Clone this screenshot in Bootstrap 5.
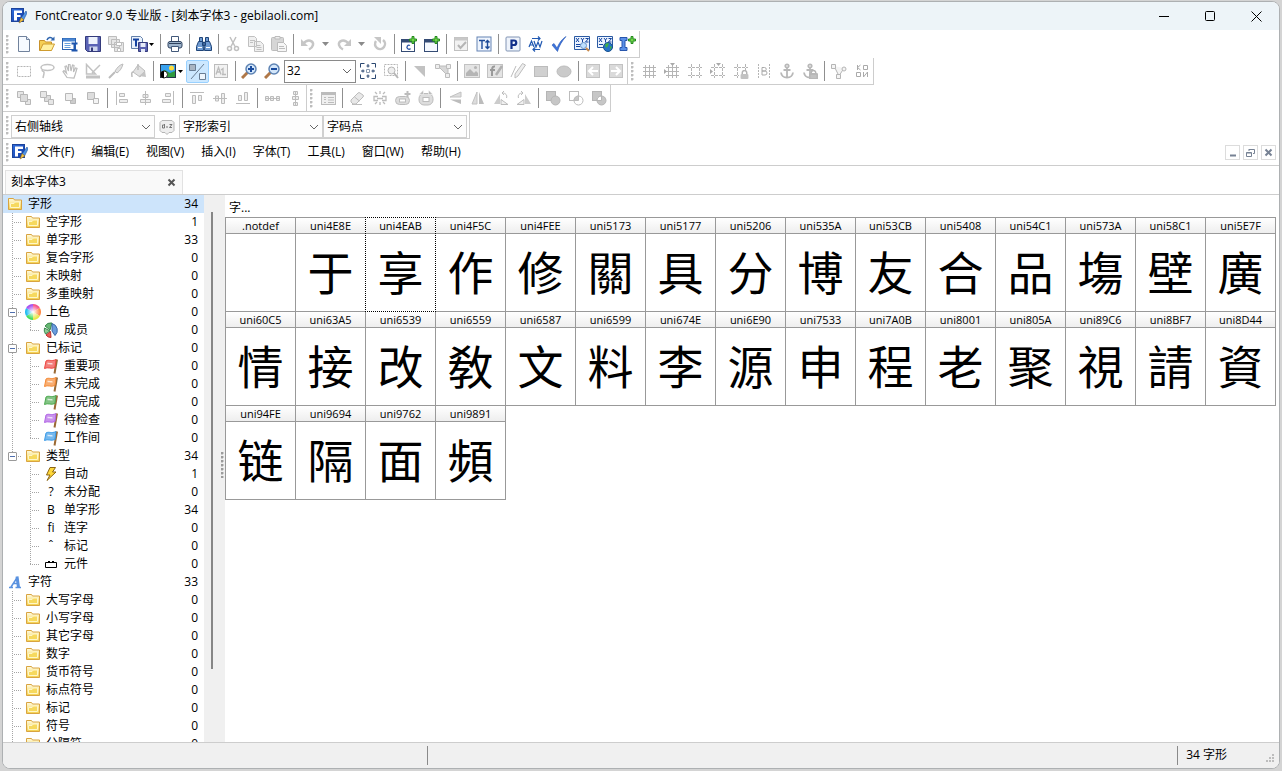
<!DOCTYPE html>
<html lang="zh-CN">
<head>
<meta charset="utf-8">
<meta name="viewport" content="width=device-width, initial-scale=1">
<title>FontCreator 9.0 专业版</title>
<link href="https://cdn.jsdelivr.net/npm/bootstrap@5.3.0/dist/css/bootstrap.min.css" rel="stylesheet">
<script src="https://cdn.jsdelivr.net/npm/bootstrap@5.3.0/dist/js/bootstrap.bundle.min.js"></script>
<style>
body{font-family:"Open Sans","Noto Sans CJK SC",sans-serif;font-size:12px;line-height:18px;color:#000;background:#d4d4d4;padding:1px 2px 2px;overflow:hidden}
button{font:inherit;color:inherit;background:none;border:0;padding:0}
svg{display:block;flex:none}
.win{border:1px solid #adb0b2;border-radius:8px;background:#fff;overflow:hidden}
.titlebar{height:29px;background:#edf4f8;padding-left:8px}
.capbtn{width:46px;height:27px;display:flex;align-items:center;justify-content:center}
.bands{padding-top:1px}
.band{height:27px;border:solid #cdcdcd;border-width:0 1px 1px 0;display:flex;align-items:center}
.strip{height:27px;border-bottom:1px solid #cdcdcd}
.grip{width:9px;height:20px;flex:none;background:radial-gradient(circle at 1px 1px,#bdbdbd 1px,transparent 2px) 3px 1px/9px 4px repeat-y}
.bar-end{border-left:1px solid #cdcdcd;height:26px;display:flex;align-items:center}
.tb{width:23px;height:23px;display:flex;align-items:center;justify-content:center;flex:none;color:#c2c2c2}
.tb.wide{width:30px;gap:1px;color:#000}
.tb.arr{width:13px;color:#8a8a8a}
.tb.on{background:#cce8ff;border:1px solid #99d1ff;border-radius:2px}
.sep{width:1px;height:20px;background:#8f8f8f;margin:0 2px 0 3px;flex:none}
.combo{font-size:12px;line-height:20px;height:23px;padding:0 20px 0 3px;border:1px solid #d0d0d0;border-radius:0;color:#000;background-color:#fdfdfd;background-image:url("data:image/svg+xml,%3Csvg xmlns='http://www.w3.org/2000/svg' viewBox='0 0 10 10'%3E%3Cpath d='M1 3l4 4 4-4' fill='none' stroke='%23666'/%3E%3C/svg%3E");background-size:10px 10px;background-position:right 3px center;width:144px}
.combo.zoom{width:72px;border-color:#8a8a8a;background-color:#fff;padding-left:2px}
.combos{align-items:flex-end;padding-right:2px}
.combos .grip{width:8px;align-self:center}
.combos .tb{width:24px}
.mi{padding:0 8px 0 9px}
.mdis{gap:3px;padding-right:3px}
.mdi{width:15px;height:15px;border:1px solid #dcdcdc;display:flex;align-items:center;justify-content:center}
.tabs{height:29px;border-bottom:1px solid #cdcdcd}
.doctab{width:178px;height:24px;margin:4px 0 0 2px;background:#f9f9f9;border:1px solid #e2e2e2;border-bottom:0;padding:0 6px 0 5px}
.tree{width:201px;overflow:hidden}
.trow{height:18px;padding:0 6px 0 9px;display:flex;align-items:center;position:relative}
.trow.top{padding-left:3px}
.trow.sel{background:#cde4fb}
.ic{width:18px;height:18px;display:flex;align-items:center;justify-content:center;margin-right:4px;flex:none}
.guide{width:18px;height:18px;flex:none}
.twig{width:12px;height:18px;flex:none}
.guide,.twig{--v:repeating-linear-gradient(#a5a5a5 0 1px,#fff 1px 2px);--h:repeating-linear-gradient(90deg,#a5a5a5 0 1px,#fff 1px 2px)}
.guide.line{background:var(--v) 0 0/1px 18px no-repeat}
.twig{background:var(--v) 0 0/1px 18px no-repeat,var(--h) 0 9px/10px 1px no-repeat}
.twig.last{background:var(--v) 0 0/1px 9px no-repeat,var(--h) 0 9px/10px 1px no-repeat}
.exp{position:absolute;left:5px;top:5px;width:9px;height:9px;border:1px solid #9a9a9a;border-radius:1px;background:linear-gradient(#4f6fae,#4f6fae) center/5px 1px no-repeat,#fff}
.scroll{width:21px;background:#f0f0f0;padding-top:17px}
.thumb{width:2px;height:457px;background:#868686;margin-left:7px}
.split{width:3px;height:26px;margin:240px 0 0 8px;background:radial-gradient(circle at 1px 1px,#9b9b9b 1px,transparent 2px) 0 0/3px 4px}
.glyphs{display:grid;grid-template-columns:repeat(auto-fill,70px);margin:0;padding:0 0 0 1px;list-style:none}
.glyphs li{height:95px;margin:0 0 -1px -1px;border:1px solid #999}
.glyphs span{display:block;height:16px;line-height:16px;text-align:center;border-bottom:1px solid #999;background:linear-gradient(#fff,#eee);font-size:11px}
.glyphs b{display:block;font:400 46px/72px "Noto Sans CJK TC","Noto Sans CJK SC",sans-serif;text-align:center}
.glyphs .cur{border:1px dotted #000;background:#fff;position:relative;z-index:1}
.status{height:27px;background:#f0f0f0;border-top:1px solid #cdcdcd}
.vline{width:1px;height:19px;background:#8a8a8a}
</style>
</head>
<body class="vh-100">
<svg width="0" height="0" class="position-absolute">
<defs>
<linearGradient id="gy" x2="0" y2="1"><stop stop-color="#fffbe0"/><stop offset="1" stop-color="#f3d04a"/></linearGradient>
<linearGradient id="gb" x2="1" y2="1"><stop stop-color="#2f6fe0"/><stop offset="1" stop-color="#1238a0"/></linearGradient>
<radialGradient id="gw"><stop stop-color="#fff"/><stop offset="1" stop-color="#fff" stop-opacity="0"/></radialGradient>
</defs>
<symbol id="logo" viewBox="0 0 16 16"><rect x=".5" y=".5" width="12" height="13" fill="url(#gb)" stroke="#1c449c"/><path d="M3 2.500h8v2.500H6v2h3.500v2H6v3.500H3z" fill="#fff"/><path d="M15 3l-5 7-1 4 3.500-2L16 5z" fill="#4f94e4" stroke="#1f4f9c" stroke-width=".6"/><path d="M8 15l2-5.500 3 2.500z" fill="#f5c242" stroke="#7a5a1c" stroke-width=".5"/></symbol>
<symbol id="folder" viewBox="0 0 16 16"><path d="M1.500 13.500v-11h5l1 1.500h7v9.500z" fill="url(#gy)" stroke="#d9a441"/><path d="M3.500 11.500v-4H7l1.500-1.500h4v5.500z" fill="#f6d95e" stroke="#fff6c8"/></symbol>
<symbol id="flag" viewBox="0 0 16 16"><path d="M14 1.500L11.500 15.500" stroke="#9a6a35" stroke-width="2"/><path d="M3 3c3-2 5 1 10-1.500L12 9.500c-4 2-7-1-10.500 1z" fill="currentColor" fill-opacity=".7" stroke="currentColor"/><path d="M4.500 5.500c2-.5 3 .8 5 .2" stroke="#fff" stroke-opacity=".7" stroke-width="1.500" fill="none"/></symbol>
<symbol id="dn" viewBox="0 0 7 4"><path d="M0 0h7L3.500 4z" fill="currentColor"/></symbol>
<symbol id="plus" viewBox="0 0 8 8"><path d="M3 .5h2V3h2.500v2H5v2.500H3V5H.5V3H3z" fill="#6fd34a" stroke="#228a1c"/></symbol>
<symbol id="lock" viewBox="0 0 8 8"><path d="M2 4V2.500a2 2 0 014 0V4" fill="none" stroke="#b5b5b5" stroke-width="1.300"/><rect x=".5" y="3.500" width="7" height="4.500" rx="1" fill="#c2c2c2"/></symbol>
</svg>

<div class="win h-100 d-flex flex-column">
<header class="titlebar d-flex align-items-center">
<svg width="16" height="16"><use href="#logo"/></svg>
<span class="ms-2 me-auto">FontCreator 9.0 专业版 - [刻本字体3 - gebilaoli.com]</span>
<button class="capbtn" aria-label="最小化"><svg width="11" height="11"><path d="M0 5.500h10" stroke="#000"/></svg></button>
<button class="capbtn" aria-label="最大化"><svg width="11" height="11" fill="none"><rect x=".5" y=".5" width="9" height="9" rx="1" stroke="#000"/></svg></button>
<button class="capbtn" aria-label="关闭"><svg width="11" height="11"><path d="M.5.5l10 10M10.500.5l-10 10" stroke="#000"/></svg></button>
</header>

<div class="bands d-flex flex-column">
<div class="band align-self-start">
<i class="grip"></i>
<button class="tb" aria-label="新建"><svg width="16" height="16" fill="none"><path d="M2.500.5h8l3 3v12h-11z" fill="#f6faff" stroke="#71829c"/><path d="M10.500.5v3h3" fill="#dce6f5" stroke="#71829c"/></svg></button>
<button class="tb" aria-label="打开"><svg width="16" height="16"><path d="M.5 14.500v-10h5l1 1.500h6v8z" fill="#f5cf55" stroke="#c8922a"/><path d="M1 14.500L4 8h11.500l-3 6.500z" fill="#fff0a0" stroke="#cf9c2f"/><path d="M8 4c1-3 4-3.500 6-1" fill="none" stroke="#2f65ae" stroke-width="1.500"/><path d="M15.500.5v4h-4z" fill="#2f65ae"/></svg></button>
<button class="tb" aria-label="打开已安装字体"><svg width="16" height="16"><rect x=".5" y="2.500" width="13" height="11" fill="#fff" stroke="#2b62b0"/><path d="M1 4h12" stroke="#4b87d4" stroke-width="3"/><path d="M2.500 7.500h6m-6 2h6m-6 2h6" stroke="#68a0dd"/><path d="M9.500 7.500h6m-3 0v7m-3 0h6" stroke="#1d55ad" stroke-width="2"/></svg></button>
<button class="tb" aria-label="保存"><svg width="16" height="16"><path d="M.5.5h15v15h-13l-2-2z" fill="#5a63b5" stroke="#343b7c"/><path d="M3.500 1h9v7h-9z" fill="#eef3fc"/><path d="M4.500 10.500h8V15h-8z" fill="#cfd7ee"/><path d="M6 11.500h2V15H6z" fill="#343b7c"/></svg></button>
<button class="tb" aria-label="全部保存"><svg width="16" height="16" fill="#e6e6e6" stroke="#bdbdbd"><path d="M.5.5h8v8h-8zM3.500 3.500h8v8h-8zM6.500 6.500h9v9h-9z"/><path d="M8.500 6.500h5v3h-5zM9.500 12.500h3v3h-3z" fill="#fff"/></svg></button>
<button class="tb wide" aria-label="导出字体"><svg width="17" height="16"><path d="M.5.5h9l2 2v10H.5z" fill="#eaf2fc" stroke="#6380aa"/><path d="M2 3.500h6m-3 0v7" stroke="#1542a0" stroke-width="2"/><path d="M7.500 6.500h9v9h-9z" fill="#5960b0" stroke="#343b7c"/><path d="M9.500 7h5v4h-5zM10 13h4v3h-4z" fill="#e6ebf8"/></svg><svg width="5" height="3"><use href="#dn"/></svg></button>
<i class="sep"></i>
<button class="tb" aria-label="打印"><svg width="16" height="16"><path d="M4.500.5h7v5h-7z" fill="#fff" stroke="#42597a"/><rect x="1" y="5.500" width="14" height="6.500" rx="2" fill="#9eb4cc" stroke="#2f425e"/><path d="M2 7.500h12" stroke="#2f425e"/><path d="M4.500 10.500h7v5h-7z" fill="#fff" stroke="#42597a"/></svg></button>
<i class="sep"></i>
<button class="tb" aria-label="查找"><svg width="16" height="16" fill="#6f9bd2" stroke="#1f4478"><path d="M3.500 1.500h3v4h-3zM9.500 1.500h3v4h-3zM2.500 5.500h4.500l.5 9h-7v-4zM13.500 5.500H9l-.5 9h7v-4zM6.500 6.500h3v3h-3z"/><path d="M2 11.500h4m4 0h4" stroke="#fff"/></svg></button>
<i class="sep"></i>
<button class="tb" aria-label="剪切"><svg width="16" height="16" fill="none" stroke="#c0c0c0" stroke-width="1.500"><path d="M5 1l5 9.500M11 1L6 10.500"/><circle cx="4.500" cy="12.500" r="2"/><circle cx="11.500" cy="12.500" r="2"/></svg></button>
<button class="tb" aria-label="复制"><svg width="16" height="16" fill="#f0f0f0" stroke="#c0c0c0"><path d="M.5.500h6l2 2v8h-8zM6.500 5.500h6l3 3v7h-9z"/><path d="M2 4.500h5m-5 2h3M8.500 9.500h4m-4 2h5m-5 2h5"/></svg></button>
<button class="tb" aria-label="粘贴"><svg width="16" height="16" fill="#d6d6d6" stroke="#bcbcbc"><rect x=".5" y="1.500" width="12" height="13" rx="1"/><path d="M4 .5h5v2.500H4z" fill="#eee"/><path d="M6.500 6.500h6l3 3v6h-9z" fill="#f6f6f6"/><path d="M8 10.500h5m-5 2h6"/></svg></button>
<i class="sep"></i>
<button class="tb" aria-label="撤销"><svg width="16" height="16" fill="none" stroke="#c6c6c6" stroke-width="2.500"><path d="M3 8c5-6 11-3 10 1-.5 2-2 3.500-4 4.500"/><path d="M1 3v7h7z" fill="#c6c6c6" stroke="none"/></svg></button>
<button class="tb arr" aria-label="撤销列表"><svg width="7" height="4"><use href="#dn"/></svg></button>
<button class="tb" aria-label="重做"><svg width="16" height="16" fill="none" stroke="#c6c6c6" stroke-width="2.500"><path d="M13 8C8 2 2 5 3 9c.5 2 2 3.500 4 4.500"/><path d="M15 3v7H8z" fill="#c6c6c6" stroke="none"/></svg></button>
<button class="tb arr" aria-label="重做列表"><svg width="7" height="4"><use href="#dn"/></svg></button>
<button class="tb" aria-label="重复"><svg width="16" height="16" fill="none" stroke="#c6c6c6" stroke-width="2.500"><path d="M11 4a5 5 0 11-7 1"/><path d="M2 1h7v7z" fill="#c6c6c6" stroke="none"/></svg></button>
<i class="sep"></i>
<button class="tb" aria-label="添加字符"><svg width="16" height="16"><rect x=".5" y="3.500" width="13" height="12" fill="#fff" stroke="#344b74"/><path d="M1 5h12" stroke="#344b74" stroke-width="3"/><path d="M9 9.500a2 2 0 10.500 3" fill="none" stroke="#2952a5" stroke-width="1.300"/><use href="#plus" x="8" width="8" height="8"/></svg></button>
<button class="tb" aria-label="添加字形"><svg width="16" height="16"><rect x=".5" y="3.500" width="13" height="12" fill="#f5f9ff" stroke="#344b74"/><path d="M1 5h12" stroke="#344b74" stroke-width="3"/><use href="#plus" x="8" width="8" height="8"/></svg></button>
<i class="sep"></i>
<button class="tb" aria-label="验证"><svg width="16" height="16"><rect x="1.500" y="1.500" width="13" height="13" fill="#f2f2f2" stroke="#c0c0c0"/><path d="M1.500 3h13" stroke="#c8c8c8" stroke-width="3"/><path d="M5 9l2.500 3L13 6" fill="none" stroke="#b5b5b5" stroke-width="2"/></svg></button>
<button class="tb" aria-label="自动度量"><svg width="16" height="16" fill="none" stroke="#1d4a98"><rect x="1" y="1" width="14" height="14" fill="#eef4fd" stroke="#6483b4"/><path d="M3 4.500h6M6 4.500V13m5.500-8.500v8m-2-6l2-2 2 2m-4 4l2 2 2-2" stroke-width="1.400"/></svg></button>
<i class="sep"></i>
<button class="tb" aria-label="预览"><svg width="16" height="16"><rect x="1" y="1" width="14" height="14" rx="1" fill="#eef3fb" stroke="#8194b4"/><path d="M6.500 13V4.500H9a2.200 2.200 0 010 4.500H7" fill="none" stroke="#12308a" stroke-width="2.200"/></svg></button>
<button class="tb" aria-label="字距调整"><svg width="16" height="16" fill="none" stroke="#2159b2" stroke-width="1.200"><path d="M1 11l2.500-6L6 11M2 9h3M6 5l2 6 2-5 2 5 2-6M4 2.500h8m-2-2l2 2-2 2M12 13.500H5m2-2l-2 2 2 2"/></svg></button>
<button class="tb" aria-label="检查"><svg width="16" height="16"><path d="M1 9l2-1.500L6 12C8 7 11 3 15 .5 11 5 8 10 6.500 15.500z" fill="#3d73dd" stroke="#2757b5" stroke-width=".6"/></svg></button>
<button class="tb" aria-label="测试字体"><svg width="16" height="16"><path d="M.5.5h15v13H.5z" fill="#edf4ff" stroke="#2b5aa2"/><path d="M2 2l3 4m0-4L2 6m5-4l1.500 2L10 2M8.500 4v2.500M11.500 2.500h3l-3 3.500h3M2 8.500h5m-5 2h4" fill="none" stroke="#1546a0"/><circle cx="9.500" cy="9.500" r="3" fill="#bfe0ff" stroke="#6b94c6"/><path d="M12 12l3 3" stroke="#c98a4a" stroke-width="2"/></svg></button>
<button class="tb" aria-label="网络测试"><svg width="16" height="16"><path d="M.5.5h15v11H.5z" fill="#edf4ff" stroke="#2b5aa2"/><path d="M2 2l3 4m0-4L2 6m5-4l1.500 2L10 2M8.500 4v2.500M11.500 2.500h3l-3 3.500h3M2 8.500h4" fill="none" stroke="#1546a0"/><circle cx="11" cy="11" r="4.500" fill="#2674c8" stroke="#18508e"/><path d="M8 9c2-3 3-1 4-2l-1 3-2 2zm5 1l2 1-2 3z" fill="#3fae49"/></svg></button>
<button class="tb" aria-label="安装字体"><svg width="17" height="16"><path d="M1 1.500h7v3H6v7h2v3H1v-3h2v-7H1z" fill="#5a90e8" stroke="#2755ac"/><use href="#plus" x="9" width="8" height="8"/></svg></button>
</div>

<div class="band align-self-start">
<i class="grip"></i>
<button class="tb" aria-label="矩形选择"><svg width="16" height="16" fill="none"><rect x="1.500" y="3.500" width="13" height="10" stroke="#b5b5b5" stroke-dasharray="2 1"/></svg></button>
<button class="tb" aria-label="套索"><svg width="16" height="16" fill="none" stroke="#c2c2c2" stroke-width="1.500"><ellipse cx="8.500" cy="4.500" rx="6.500" ry="3"/><path d="M3 6.500c0 3 3 1 2 4l-1 4.500"/></svg></button>
<button class="tb" aria-label="平移"><svg width="16" height="16" fill="none" stroke="#bcbcbc" stroke-width="1.200"><path d="M5 14.500L1 8.500l1-1L4.500 10 3 3.500l1.500-.5L6.500 8 6.500 1.500H8L9 8l1.500-6 1.500.5L11.500 9 13.500 5l1.500.5-2 6.500-1 3z"/></svg></button>
<button class="tb" aria-label="测量"><svg width="16" height="16" fill="none" stroke="#c2c2c2" stroke-width="1.500"><path d="M1.500 1.500l9 9.500h-9zM15 2L7 10"/><path d="M1 14h14" stroke-width="3"/></svg></button>
<button class="tb" aria-label="刀"><svg width="16" height="16"><path d="M15 1c-4 1-6 4-8 7l2 2c3-2 5-5 6-9z" fill="#e2e2e2" stroke="#bcbcbc"/><path d="M7 9l-6 6" stroke="#bcbcbc" stroke-width="2"/></svg></button>
<button class="tb" aria-label="填充"><svg width="16" height="16"><path d="M7 2l7 6-5 6-7-5z" fill="#e2e2e2" stroke="#bcbcbc"/><path d="M2 9c-2 0-1 3-1 5M7 7V1" stroke="#bcbcbc" stroke-width="1.500" fill="none"/><path d="M8 13l6-5 1 6z" fill="#c4c4c4"/></svg></button>
<i class="sep"></i>
<button class="tb wide" aria-label="背景图像"><svg width="17" height="16"><rect x=".5" y="1.500" width="15" height="13" fill="#38a1ee" stroke="#26364a"/><path d="M1 14V9l4-2 5 3 5-2v6z" fill="#2f9a3f"/><circle cx="11.500" cy="5" r="2.500" fill="#ffdc3c"/><circle cx="4" cy="11.500" r="3.500" fill="#fff" stroke="#222"/><path d="M4 8a3.500 3.500 0 000 7z"/></svg><svg width="5" height="3"><use href="#dn"/></svg></button>
<button class="tb on" aria-label="轮廓与节点" aria-pressed="true"><svg width="17" height="17" fill="none" stroke="#6a7e94"><path d="M.5 1.500h6v6h-6z" fill="#a9b5c2"/><path d="M10.500 10.500h6v6h-6z" fill="#eef6fd"/><path d="M2 16L15 1"/></svg></button>
<button class="tb" aria-label="字符显示"><svg width="16" height="16" fill="none" stroke="#bcbcbc"><rect x="1.500" y="1.500" width="13" height="13" fill="#f2f2f2"/><path d="M3 11.500l2.500-7 2.500 7M4 9h3m3 2.500v-6l-2 1.500m1 4.500h4" stroke-width="1.300"/></svg></button>
<i class="sep"></i>
<button class="tb" aria-label="放大"><svg width="17" height="16"><path d="M7 9l-6 6" stroke="#b07848" stroke-width="3"/><circle cx="10" cy="6" r="5" fill="#d3e6fa" stroke="#5f84b4" stroke-width="1.500"/><path d="M7 6h6m-3-3v6" stroke="#194b9e" stroke-width="2"/></svg></button>
<button class="tb" aria-label="缩小"><svg width="17" height="16"><path d="M7 9l-6 6" stroke="#b07848" stroke-width="3"/><circle cx="10" cy="6" r="5" fill="#d3e6fa" stroke="#5f84b4" stroke-width="1.500"/><path d="M7 6h6" stroke="#194b9e" stroke-width="2"/></svg></button>
<select class="form-select combo zoom" aria-label="缩放"><option>32</option></select>
<button class="tb" aria-label="适合窗口"><svg width="16" height="16" fill="none" stroke="#2a4770"><path d="M.5 4.500v-4h4m7 0h4v4m0 7v4h-4m-7 0h-4v-4M8 1v3.500M8 11.500V15M1 8h3.500M11.500 8H15M6.500 3h3m-3 10h3M3 6.500v3m10-3v3" /><path d="M6.500 6.500h3v3h-3z" stroke="#8a9ab0"/></svg></button>
<button class="tb" aria-label="缩放选区"><svg width="16" height="16" fill="none" stroke="#b5b5b5"><path d="M1.500 1.500h13v11h-13z" stroke-dasharray="2 1"/><circle cx="8.500" cy="7.500" r="3.500" fill="#eee"/><path d="M11 10l4 5" stroke-width="2"/></svg></button>
<i class="sep"></i>
<button class="tb" aria-label="轮廓"><svg width="16" height="16"><path d="M2 3h11v11z" fill="#c2c2c2"/></svg></button>
<button class="tb" aria-label="节点"><svg width="16" height="16" fill="#eee" stroke="#bcbcbc"><path d="M3 3l10 10V3z" fill="#d8d8d8"/><path d="M.5 1.500h4v4h-4zM11.500 1.500h4v4h-4zM10.500 10.500h4v4h-4z"/></svg></button>
<i class="sep"></i>
<button class="tb" aria-label="插入图像"><svg width="16" height="16"><rect x=".5" y="1.500" width="15" height="13" fill="#e4e4e4" stroke="#c2c2c2"/><path d="M2 13V10l4-4 4 4 2-2 2 2v3z" fill="#b5b5b5"/><circle cx="11.500" cy="4.500" r="1.500" fill="#b5b5b5"/></svg></button>
<button class="tb" aria-label="编辑图像"><svg width="16" height="16"><rect x=".5" y="1.500" width="15" height="13" fill="#e4e4e4" stroke="#c2c2c2"/><path d="M8 3.500c-3-.5-3 1-3 9.500M3 7h5" stroke="#999" stroke-width="2" fill="none"/><path d="M15 3l-6 9" stroke="#b0b0b0" stroke-width="2.500"/></svg></button>
<button class="tb" aria-label="绘制轮廓"><svg width="16" height="16" fill="#eee" stroke="#bcbcbc"><path d="M12.500.5l3 1.500L8 13l-3 2V11zM6 3L1 14"/></svg></button>
<button class="tb" aria-label="矩形"><svg width="16" height="16"><rect x="1.500" y="3.500" width="13" height="10" fill="#d0d0d0" stroke="#bcbcbc"/></svg></button>
<button class="tb" aria-label="椭圆"><svg width="16" height="16"><ellipse cx="8" cy="8.500" rx="7" ry="5.500" fill="#cacaca" stroke="#bcbcbc"/></svg></button>
<i class="sep"></i>
<button class="tb" aria-label="上一个"><svg width="16" height="16"><rect x="1.500" y="1.500" width="13" height="13" fill="#dadada" stroke="#c2c2c2"/><path d="M13 8H4m4-4L4 8l4 4" fill="none" stroke="#fff" stroke-width="2"/></svg></button>
<button class="tb" aria-label="下一个"><svg width="16" height="16"><rect x="1.500" y="1.500" width="13" height="13" fill="#dadada" stroke="#c2c2c2"/><path d="M3 8h9M8 4l4 4-4 4" fill="none" stroke="#fff" stroke-width="2"/></svg></button>
<div class="bar-end"><i class="grip"></i></div>
<button class="tb" aria-label="网格"><svg width="16" height="16" stroke="#b5b5b5"><path d="M4.500 2v13m4-13v13m4-13v13M2 4.500h13m-13 4h13m-13 4h13"/></svg></button>
<button class="tb" aria-label="对齐网格"><svg width="16" height="16" stroke="#b5b5b5"><path d="M4.500 2v13m4-13v13m4-13v13M2 4.500h13m-13 4h13m-13 4h13"/><path d="M6 0h5L8.500 3zM0 6v5l3-2.500z" fill="#aaa" stroke="none"/></svg></button>
<button class="tb" aria-label="参考线"><svg width="16" height="16" stroke="#b5b5b5" stroke-dasharray="3 1"><path d="M4.500 1v14M12.500 1v14M1 4.500h14M1 12.500h14"/></svg></button>
<button class="tb" aria-label="对齐参考线"><svg width="16" height="16"><path d="M4.500 1v14M12.500 1v14M1 4.500h14M1 12.500h14" stroke="#b5b5b5" stroke-dasharray="3 1"/><path d="M6 0h5L8.500 3zM0 6v5l3-2.500z" fill="#aaa"/></svg></button>
<button class="tb" aria-label="锁定参考线"><svg width="16" height="16"><path d="M4.500 1v14M12.500 1v6M1 4.500h14M1 12.500h5" stroke="#b5b5b5" stroke-dasharray="3 1"/><use href="#lock" x="7" y="7" width="9" height="9"/></svg></button>
<button class="tb" aria-label="边界"><svg width="16" height="16" fill="none" stroke="#b5b5b5"><path d="M2.500 1v14M13.500 1v14" stroke-dasharray="2 1"/><path d="M6 4.500h2.500a1.500 1.500 0 010 3.500H6h3a1.500 1.500 0 010 4H6z" stroke="#aaa"/></svg></button>
<button class="tb" aria-label="锚点"><svg width="16" height="16" fill="none" stroke="#b8b8b8" stroke-width="1.800"><circle cx="8" cy="3" r="1.700"/><path d="M8 5v10M4.500 7h7M2 9.500c.5 4 3 5 6 5s5.500-1 6-5"/></svg></button>
<button class="tb" aria-label="锁定锚点"><svg width="16" height="16" fill="none" stroke="#b8b8b8" stroke-width="1.800"><circle cx="8" cy="3" r="1.700"/><path d="M8 5v10M4.500 7h7M2 9.500c.5 4 3 5 6 5"/><use href="#lock" x="7" y="7" width="9" height="9"/></svg></button>
<i class="sep"></i>
<button class="tb" aria-label="连接节点"><svg width="16" height="16" fill="#f4f4f4" stroke="#b5b5b5"><path d="M3 3l5 10 5-8"/><path d="M.5 1.500h4v4h-4zM5.500 11.500h4v4h-4z"/><circle cx="13" cy="6" r="2"/></svg></button>
<button class="tb" aria-label="方向"><svg width="16" height="16" fill="none" stroke="#aaa"><path d="M3.500 2v5m0-2.500L6.500 2m-3 2.500L6.500 7M9.500 2.500h4v4h-4zM2.500 9.500h4v4h-4zM9.500 9v5m4-5v5m-4 0l4-5"/></svg></button>
</div>

<div class="band align-self-start">
<i class="grip"></i>
<button class="tb" aria-label="置于顶层"><svg width="16" height="16" fill="#e6e6e6" stroke="#b8b8b8"><path d="M1.500 1.500h6v6h-6zM9.500 9.500h5v5h-5z"/><path d="M4.500 4.500h7v7h-7z" fill="#dcdcdc"/></svg></button>
<button class="tb" aria-label="置于底层"><svg width="16" height="16" fill="#e6e6e6" stroke="#b8b8b8"><path d="M5.500 5.500h6v6h-6z" fill="#dcdcdc"/><path d="M1.500 1.500h6v6h-6zM9.500 9.500h5v5h-5z"/></svg></button>
<button class="tb" aria-label="上移一层"><svg width="16" height="16" fill="#eee" stroke="#b8b8b8"><path d="M8.500 8.500h5v5h-5z" fill="#ccc"/><path d="M3.500 3.500h7v7h-7z"/></svg></button>
<button class="tb" aria-label="下移一层"><svg width="16" height="16" fill="#ddd" stroke="#b8b8b8"><path d="M2.500 2.500h7v7h-7z"/><path d="M8.500 8.500h5v5h-5z" fill="#f4f4f4"/></svg></button>
<i class="sep"></i>
<button class="tb" aria-label="左对齐"><svg width="16" height="16" fill="#eee" stroke="#bcbcbc"><path d="M2.500 1v14M5.500 3.500h5v3h-5zM5.500 9.500h8v3h-8z"/></svg></button>
<button class="tb" aria-label="水平居中"><svg width="16" height="16" fill="#eee" stroke="#bcbcbc"><path d="M8.500 1v14M6 4.500h5v3H6zM3.500 9.500h10v3h-10z"/></svg></button>
<button class="tb" aria-label="右对齐"><svg width="16" height="16" fill="#eee" stroke="#bcbcbc"><path d="M13.500 1v14M5.500 3.500h5v3h-5zM2.500 9.500h8v3h-8z"/></svg></button>
<i class="sep"></i>
<button class="tb" aria-label="顶对齐"><svg width="16" height="16" fill="#eee" stroke="#bcbcbc"><path d="M1 2.500h14M3.500 5.500h3v8h-3zM9.500 5.500h3v5h-3z"/></svg></button>
<button class="tb" aria-label="垂直居中"><svg width="16" height="16" fill="#eee" stroke="#bcbcbc"><path d="M1 8.500h14M3.500 6h3v5h-3zM9.500 3.500h3v10h-3z"/></svg></button>
<button class="tb" aria-label="底对齐"><svg width="16" height="16" fill="#eee" stroke="#bcbcbc"><path d="M1 13.500h14M3.500 5.500h3v5h-3zM9.500 2.500h3v8h-3z"/></svg></button>
<i class="sep"></i>
<button class="tb" aria-label="水平分布"><svg width="16" height="16" fill="#eee" stroke="#bcbcbc"><path d="M1 8.500h14M1.500 6.500h3v4h-3zM6.500 6.500h3v4h-3zM12.500 6.500h3v4h-3z"/></svg></button>
<button class="tb" aria-label="垂直分布"><svg width="16" height="16" fill="#eee" stroke="#bcbcbc"><path d="M8.500 1v14M6.500 1.500h4v3h-4zM5.500 6.500h6v3h-6zM6.500 12.500h4v3h-4z"/></svg></button>
<div class="bar-end"><i class="grip"></i></div>
<button class="tb" aria-label="字形属性"><svg width="16" height="16" fill="#f0f0f0" stroke="#bcbcbc"><rect x="1.500" y="2.500" width="14" height="12"/><path d="M1.500 4h14" stroke-width="2"/><path d="M4 7.500h2m-2 2h2m-2 3h2m2-5h6m-6 2.500h6m-6 2.500h6"/></svg></button>
<i class="sep"></i>
<button class="tb" aria-label="擦除"><svg width="16" height="16" fill="#e8e8e8" stroke="#bcbcbc"><path d="M2 10l7-7q1-1 2 0l3 2q1 1 0 2l-7 7H4l-2-2zM5.500 7l5 4M3 14.500h10"/></svg></button>
<button class="tb" aria-label="断开"><svg width="16" height="16" fill="none" stroke="#bcbcbc" stroke-width="1.300"><path d="M6 6.500H2v4h4M10 6.500h4v4h-4M5 8.500h6M8 1v3M8 12v3M3 2l2 2M13 2l-2 2M3 14l2-2M13 14l-2-2"/></svg></button>
<button class="tb" aria-label="合并"><svg width="16" height="16" fill="#ddd" stroke="#bcbcbc"><rect x=".5" y="6.500" width="14" height="8" rx="4"/><rect x="4.500" y="9" width="6" height="3" fill="#fff"/><path d="M12.500 1v6m-3-3h6" stroke-width="2"/></svg></button>
<button class="tb" aria-label="反向"><svg width="16" height="16" fill="#ddd" stroke="#bcbcbc"><rect x="1" y="3.500" width="14" height="11.500" rx="5"/><rect x="5" y="7.500" width="6" height="4" fill="#fff"/><path d="M5.500 0v4.500H1zM10.500 0v4.500H15z" fill="#bcbcbc" stroke="#fff" stroke-width=".5"/></svg></button>
<i class="sep"></i>
<button class="tb" aria-label="垂直翻转"><svg width="16" height="16"><path d="M14 2v5H3z" fill="#ddd" stroke="#c2c2c2"/><path d="M3 9.500h11V14z" fill="#bcbcbc"/></svg></button>
<button class="tb" aria-label="水平翻转"><svg width="16" height="16"><path d="M7 2v12H2z" fill="#ddd" stroke="#c2c2c2"/><path d="M9 2v12h5z" fill="#bcbcbc"/></svg></button>
<button class="tb" aria-label="向左旋转"><svg width="16" height="16"><path d="M7 4v10H1z" fill="#ccc"/><path d="M8 9.500v5h7z" fill="#f0f0f0" stroke="#bcbcbc"/><path d="M13.500 8c1-3-1-5-4-5m1.500-2L9 3l2 2" fill="none" stroke="#bcbcbc"/></svg></button>
<button class="tb" aria-label="向右旋转"><svg width="16" height="16"><path d="M9 4v10h6z" fill="#ccc"/><path d="M8 9.500v5H1z" fill="#f0f0f0" stroke="#bcbcbc"/><path d="M2.500 8c-1-3 1-5 4-5M5 1l2 2-2 2" fill="none" stroke="#bcbcbc"/></svg></button>
<i class="sep"></i>
<button class="tb" aria-label="并集"><svg width="16" height="16" fill="#c6c6c6" stroke="#b5b5b5"><rect x="1.500" y="1.500" width="9" height="9"/><circle cx="10.500" cy="10.500" r="4.500"/></svg></button>
<button class="tb" aria-label="交集"><svg width="16" height="16" fill="#fff" stroke="#bcbcbc"><rect x="1.500" y="1.500" width="9" height="9"/><circle cx="10.500" cy="10.500" r="4.500"/><path d="M10.500 6v4.500H6A4.500 4.500 0 0110.500 6z" fill="#c6c6c6"/></svg></button>
<button class="tb" aria-label="差集"><svg width="16" height="16" fill="#c6c6c6" stroke="#b5b5b5"><rect x="1.500" y="1.500" width="9" height="9"/><circle cx="10.500" cy="10.500" r="4.500"/><path d="M10.500 6v4.500H6A4.500 4.500 0 0110.500 6z" fill="#fff"/></svg></button>
</div>

<div class="band combos align-self-start">
<i class="grip"></i>
<select class="form-select combo" aria-label="轴线"><option>右侧轴线</option></select>
<button class="tb" aria-label="排序"><svg width="18" height="16"><path d="M4 1.500h10l2 2v8l-2 2h-3l-2 2-2-2H4l-2-2v-8z" fill="#eee" stroke="#b5b5b5"/><path d="M6.500 6H4.500v3h2V5M8 8h2m1.500-2.500h2.500l-2.500 3H14" fill="none" stroke="#777"/></svg></button>
<select class="form-select combo" aria-label="索引"><option>字形索引</option></select>
<select class="form-select combo" aria-label="码点"><option>字码点</option></select>
</div>
</div>

<nav class="strip d-flex align-items-center">
<i class="grip"></i>
<svg width="16" height="16"><use href="#logo"/></svg>
<div class="d-flex me-auto">
<button class="mi">文件(F)</button><button class="mi">编辑(E)</button><button class="mi">视图(V)</button><button class="mi">插入(I)</button><button class="mi">字体(T)</button><button class="mi">工具(L)</button><button class="mi">窗口(W)</button><button class="mi">帮助(H)</button>
</div>
<div class="mdis d-flex">
<button class="mdi" aria-label="最小化文档"><svg width="9" height="9"><path d="M2 7.500h6" stroke="#778294" stroke-width="2"/></svg></button>
<button class="mdi" aria-label="还原文档"><svg width="9" height="9" fill="none" stroke="#778294"><path d="M3 1.500h5.500v4H7M3 1v2M.5 4.500h5v4h-5zM.5 5h5"/></svg></button>
<button class="mdi" aria-label="关闭文档"><svg width="9" height="9"><path d="M1.500 1.500l6 6m0-6l-6 6" stroke="#778294" stroke-width="2"/></svg></button>
</div>
</nav>

<div class="tabs">
<div class="doctab d-flex align-items-center justify-content-between"><span>刻本字体3</span><button aria-label="关闭标签"><svg width="9" height="9"><path d="M1.500 1.500l6 6m0-6l-6 6" stroke="#555" stroke-width="2"/></svg></button></div>
</div>

<main class="d-flex flex-grow-1 overflow-hidden">
<div class="tree flex-shrink-0">
<div class="trow top sel"><span class="ic"><svg width="16" height="16"><use href="#folder"/></svg></span><span class="me-auto">字形</span><span>34</span></div>
<div class="trow"><i class="twig"></i><span class="ic"><svg width="16" height="16"><use href="#folder"/></svg></span><span class="me-auto">空字形</span><span>1</span></div>
<div class="trow"><i class="twig"></i><span class="ic"><svg width="16" height="16"><use href="#folder"/></svg></span><span class="me-auto">单字形</span><span>33</span></div>
<div class="trow"><i class="twig"></i><span class="ic"><svg width="16" height="16"><use href="#folder"/></svg></span><span class="me-auto">复合字形</span><span>0</span></div>
<div class="trow"><i class="twig"></i><span class="ic"><svg width="16" height="16"><use href="#folder"/></svg></span><span class="me-auto">未映射</span><span>0</span></div>
<div class="trow"><i class="twig"></i><span class="ic"><svg width="16" height="16"><use href="#folder"/></svg></span><span class="me-auto">多重映射</span><span>0</span></div>
<div class="trow"><i class="twig"></i><button class="exp" aria-label="折叠上色"></button><span class="ic"><svg width="16" height="16" viewBox="0 0 16 16"><path d="M8 8V0a8 8 0 016.900 4z" fill="#f5578c"/><path d="M8 8l6.900-4a8 8 0 010 8z" fill="#ff8c47"/><path d="M8 8l6.900 4A8 8 0 018 16z" fill="#e6e64a"/><path d="M8 8v8a8 8 0 01-6.900-4z" fill="#43dc5c"/><path d="M8 8l-6.900 4a8 8 0 010-8z" fill="#25bdf2"/><path d="M8 8L1.100 4A8 8 0 018 0z" fill="#a753f0"/><circle cx="8" cy="8" r="7" fill="url(#gw)"/></svg></span><span class="me-auto">上色</span><span>0</span></div>
<div class="trow"><i class="guide line"></i><i class="twig last"></i><span class="ic"><svg width="16" height="16"><path d="M7 8L2 4a7 7 0 017-3z" fill="#67b873" stroke="#3d8a50"/><path d="M9 9V1.500a7 7 0 013 12z" fill="#6a9ddd" stroke="#3c68a8"/><path d="M7 9L1.500 6a7 7 0 001 6z" fill="#8ecb94" stroke="#3d8a50"/><path d="M7.500 9.500L3 13a6 6 0 005 2.500z" fill="#ec5c55" stroke="#b83430"/></svg></span><span class="me-auto">成员</span><span>0</span></div>
<div class="trow"><i class="twig"></i><button class="exp" aria-label="折叠已标记"></button><span class="ic"><svg width="16" height="16"><use href="#folder"/></svg></span><span class="me-auto">已标记</span><span>0</span></div>
<div class="trow"><i class="guide line"></i><i class="twig"></i><span class="ic" style="color:#ee4742"><svg width="16" height="16"><use href="#flag"/></svg></span><span class="me-auto">重要项</span><span>0</span></div>
<div class="trow"><i class="guide line"></i><i class="twig"></i><span class="ic" style="color:#f58a35"><svg width="16" height="16"><use href="#flag"/></svg></span><span class="me-auto">未完成</span><span>0</span></div>
<div class="trow"><i class="guide line"></i><i class="twig"></i><span class="ic" style="color:#4daa50"><svg width="16" height="16"><use href="#flag"/></svg></span><span class="me-auto">已完成</span><span>0</span></div>
<div class="trow"><i class="guide line"></i><i class="twig"></i><span class="ic" style="color:#b265e6"><svg width="16" height="16"><use href="#flag"/></svg></span><span class="me-auto">待检查</span><span>0</span></div>
<div class="trow"><i class="guide line"></i><i class="twig last"></i><span class="ic" style="color:#3b9be8"><svg width="16" height="16"><use href="#flag"/></svg></span><span class="me-auto">工作间</span><span>0</span></div>
<div class="trow"><i class="twig last"></i><button class="exp" aria-label="折叠类型"></button><span class="ic"><svg width="16" height="16"><use href="#folder"/></svg></span><span class="me-auto">类型</span><span>34</span></div>
<div class="trow"><i class="guide"></i><i class="twig"></i><span class="ic"><svg width="12" height="14"><path d="M5 .5h5.500L7.500 5h3.500L2 13.500 5 8H1.500z" fill="#ffd83a" stroke="#8a6414"/></svg></span><span class="me-auto">自动</span><span>1</span></div>
<div class="trow"><i class="guide"></i><i class="twig"></i><span class="ic">?</span><span class="me-auto">未分配</span><span>0</span></div>
<div class="trow"><i class="guide"></i><i class="twig"></i><span class="ic">B</span><span class="me-auto">单字形</span><span>34</span></div>
<div class="trow"><i class="guide"></i><i class="twig"></i><span class="ic">fi</span><span class="me-auto">连字</span><span>0</span></div>
<div class="trow"><i class="guide"></i><i class="twig"></i><span class="ic">ˆ</span><span class="me-auto">标记</span><span>0</span></div>
<div class="trow"><i class="guide"></i><i class="twig last"></i><span class="ic"><svg width="12" height="8" fill="none"><path d="M.5 7.500v-5h11v5zM3 1.500h2M7 1.500h2" stroke="#000"/></svg></span><span class="me-auto">元件</span><span>0</span></div>
<div class="trow top"><span class="ic"><svg width="14" height="14" fill="none" stroke="#5a92e0"><path d="M3 12L9.500 2M5 8.500h5M1 12.500h4M7.500 12.500h5.500" stroke-width="1.500"/><path d="M9 1.500l1.500 11" stroke-width="3"/></svg></span><span class="me-auto">字符</span><span>33</span></div>
<div class="trow"><i class="twig"></i><span class="ic"><svg width="16" height="16"><use href="#folder"/></svg></span><span class="me-auto">大写字母</span><span>0</span></div>
<div class="trow"><i class="twig"></i><span class="ic"><svg width="16" height="16"><use href="#folder"/></svg></span><span class="me-auto">小写字母</span><span>0</span></div>
<div class="trow"><i class="twig"></i><span class="ic"><svg width="16" height="16"><use href="#folder"/></svg></span><span class="me-auto">其它字母</span><span>0</span></div>
<div class="trow"><i class="twig"></i><span class="ic"><svg width="16" height="16"><use href="#folder"/></svg></span><span class="me-auto">数字</span><span>0</span></div>
<div class="trow"><i class="twig"></i><span class="ic"><svg width="16" height="16"><use href="#folder"/></svg></span><span class="me-auto">货币符号</span><span>0</span></div>
<div class="trow"><i class="twig"></i><span class="ic"><svg width="16" height="16"><use href="#folder"/></svg></span><span class="me-auto">标点符号</span><span>0</span></div>
<div class="trow"><i class="twig"></i><span class="ic"><svg width="16" height="16"><use href="#folder"/></svg></span><span class="me-auto">标记</span><span>0</span></div>
<div class="trow"><i class="twig"></i><span class="ic"><svg width="16" height="16"><use href="#folder"/></svg></span><span class="me-auto">符号</span><span>0</span></div>
<div class="trow"><i class="twig"></i><span class="ic"><svg width="16" height="16"><use href="#folder"/></svg></span><span class="me-auto">分隔符</span><span>0</span></div>
</div>
<div class="scroll flex-shrink-0 d-flex"><div class="thumb"></div><div class="split"></div></div>
<section class="flex-grow-1 overflow-hidden">
<div class="ps-1 pt-1 d-flex align-items-center">字...</div>
<ul class="glyphs">
<li><span>.notdef</span></li>
<li><span>uni4E8E</span><b>于</b></li>
<li class="cur"><span>uni4EAB</span><b>享</b></li>
<li><span>uni4F5C</span><b>作</b></li>
<li><span>uni4FEE</span><b>修</b></li>
<li><span>uni5173</span><b>關</b></li>
<li><span>uni5177</span><b>具</b></li>
<li><span>uni5206</span><b>分</b></li>
<li><span>uni535A</span><b>博</b></li>
<li><span>uni53CB</span><b>友</b></li>
<li><span>uni5408</span><b>合</b></li>
<li><span>uni54C1</span><b>品</b></li>
<li><span>uni573A</span><b>塲</b></li>
<li><span>uni58C1</span><b>壁</b></li>
<li><span>uni5E7F</span><b>廣</b></li>
<li><span>uni60C5</span><b>情</b></li>
<li><span>uni63A5</span><b>接</b></li>
<li><span>uni6539</span><b>改</b></li>
<li><span>uni6559</span><b>敎</b></li>
<li><span>uni6587</span><b>文</b></li>
<li><span>uni6599</span><b>料</b></li>
<li><span>uni674E</span><b>李</b></li>
<li><span>uni6E90</span><b>源</b></li>
<li><span>uni7533</span><b>申</b></li>
<li><span>uni7A0B</span><b>程</b></li>
<li><span>uni8001</span><b>老</b></li>
<li><span>uni805A</span><b>聚</b></li>
<li><span>uni89C6</span><b>視</b></li>
<li><span>uni8BF7</span><b>請</b></li>
<li><span>uni8D44</span><b>資</b></li>
<li><span>uni94FE</span><b>链</b></li>
<li><span>uni9694</span><b>隔</b></li>
<li><span>uni9762</span><b>面</b></li>
<li><span>uni9891</span><b>頻</b></li>
</ul>
</section>
</main>

<footer class="status d-flex align-items-center">
<div class="col-4 d-flex justify-content-end"><i class="vline"></i></div>
<div class="ms-auto d-flex align-items-center"><i class="vline me-2"></i><span>34 字形</span></div>
<svg class="ms-4 me-1 mt-2" width="24" height="10" fill="#bdbdbd"><path d="M21 0h2v2h-2zM21 3h2v2h-2zM21 6h2v2h-2zM18 3h2v2h-2zM18 6h2v2h-2zM15 6h2v2h-2z"/></svg>
</footer>
</div>
</body>
</html>
